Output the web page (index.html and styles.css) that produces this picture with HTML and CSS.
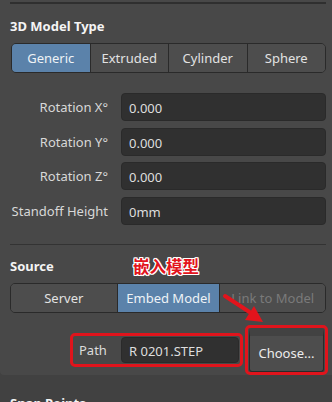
FILE: index.html
```html
<!DOCTYPE html>
<html lang="en">
<head>
    <meta charset="UTF-8">
    <meta name="viewport" content="width=device-width, initial-scale=1.0">
    <title>3D Model Properties</title>
    <link rel="stylesheet" href="styles.css">
</head>
<body>
    <div class="panel">
        <div class="topline"></div>

        <h2 class="title">3D Model Type</h2>
        <div class="segments">
            <button class="seg active">Generic</button>
            <button class="seg">Extruded</button>
            <button class="seg">Cylinder</button>
            <button class="seg">Sphere</button>
        </div>

        <div class="fields">
            <label class="label">Rotation X°</label>
            <div class="input">0.000</div>
            <label class="label">Rotation Y°</label>
            <div class="input">0.000</div>
            <label class="label">Rotation Z°</label>
            <div class="input">0.000</div>
            <label class="label">Standoff Height</label>
            <div class="input">0mm</div>
        </div>

        <div class="divider"></div>

        <h2 class="title source-title">Source</h2>
        <div class="segments source">
            <button class="seg">Server</button>
            <button class="seg active">Embed Model</button>
            <button class="seg disabled">Link to Model</button>
        </div>

        <div class="path-row">
            <div class="mark path-box">
                <span class="path-label">Path</span>
                <div class="input path-input">R 0201.STEP</div>
            </div>
            <div class="mark choose-box">
                <button class="choose">Choose...</button>
            </div>
        </div>
    </div>

    <div class="next">
        <h2 class="title">Snap Points</h2>
    </div>

    <!-- annotation overlay -->
    <div class="note">嵌入模型</div>
    <svg class="arrow" width="46" height="36" viewBox="0 0 46 36">
        <path d="M3 3 L29 20" stroke="#e3141c" stroke-width="4" stroke-linecap="round"/>
        <polygon points="41,29 23,27 32,13" fill="#e3141c"/>
    </svg>
</body>
</html>
```

FILE: styles.css
```css
body {
    margin: 0;
    width: 332px;
    height: 402px;
    overflow: hidden;
    position: relative;
    background: #414141;
    font-family: 'Noto Sans', 'Open Sans', sans-serif;
    font-size: 13px;
    color: #dcdcdc;
}
.panel {
    background: #484848;
    padding: 2px 6px 0 10px;
    border-radius: 0 0 0 4px;
}
.topline {
    height: 2px;
    background: #2f2f2f;
}
.title {
    margin: 14px 0 9px 0;
    font-size: 13px;
    font-weight: 700;
    color: #f4f4f4;
    line-height: 16px;
}
.segments {
    display: flex;
    height: 30px;
    margin-left: 1px;
    border: 1px solid #2a2a2a;
    border-radius: 5px;
    overflow: hidden;
    box-sizing: border-box;
}
.seg {
    flex: 1;
    background: #4d4d4d;
    border: none;
    border-left: 1px solid #2a2a2a;
    color: #e2e2e2;
    font-family: inherit;
    font-size: 13px;
    padding: 0;
}
.seg:first-child {
    border-left: none;
}
.seg.active {
    background: #5b82aa;
    color: #eef2f6;
}
.seg.disabled {
    color: #7a7a7a;
}
.fields {
    display: grid;
    grid-template-columns: 98px 1fr;
    column-gap: 13px;
    row-gap: 6.5px;
    margin-top: 20px;
    align-items: center;
}
.label {
    text-align: right;
    color: #d8d8d8;
}
.input {
    height: 28px;
    line-height: 28px;
    background: #303030;
    border: 1px solid #2a2a2a;
    border-radius: 4px;
    padding: 0 7px;
    box-sizing: border-box;
    color: #dedede;
}
.divider {
    height: 1px;
    background: #333;
    margin-top: 19px;
}
.source-title {
    margin-top: 13px;
    margin-bottom: 9px;
}
.source {
    margin-left: 0;
}
.source .seg:nth-child(1) { flex: 107; }
.source .seg:nth-child(2) { flex: 103; }
.source .seg:nth-child(3) { flex: 106; }
.path-row {
    display: flex;
    align-items: center;
    margin-top: 12px;
    margin-left: 60px;
}
.mark {
    border: 3px solid #e0141c;
    border-radius: 5px;
}
.path-box {
    display: flex;
    align-items: center;
    height: 34px;
    box-sizing: border-box;
    padding: 0 1px 0 6px;
}
.path-label {
    width: 42px;
}
.path-input {
    width: 118px;
    height: 26px;
    line-height: 26px;
}
.choose-box {
    margin-left: 2px;
    height: 50px;
    box-sizing: border-box;
    padding: 0 1px;
}
.choose {
    display: block;
    width: 75px;
    height: 44px;
    background: #4d4d4d;
    border: 1px solid #2a2a2a;
    border-top: 8px solid #424242;
    border-radius: 3px;
    color: #ececec;
    font-family: inherit;
    font-size: 13px;
    padding: 0;
}
.next {
    padding: 20px 10px 0;
}
.next .title {
    margin: 0;
}
.note {
    position: absolute;
    left: 133px;
    top: 254px;
    font-size: 16.5px;
    font-weight: 700;
    color: #e3141c;
    font-family: 'Noto Sans CJK SC', sans-serif;
    text-shadow: 1px 0 0 #fff, -1px 0 0 #fff, 0 1px 0 #fff, 0 -1px 0 #fff, 1px 1px 0 #fff, -1px -1px 0 #fff, 1px -1px 0 #fff, -1px 1px 0 #fff;
}
.arrow {
    position: absolute;
    left: 222px;
    top: 293px;
}
```
